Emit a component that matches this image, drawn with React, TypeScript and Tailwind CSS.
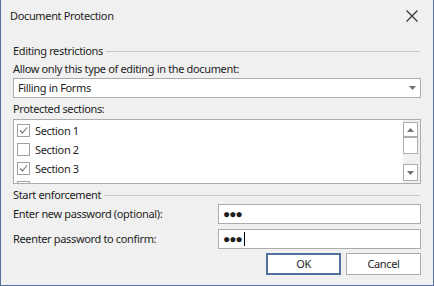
import { useState } from 'react'

const font = { fontFamily: '"Noto Sans", "Open Sans", sans-serif' }
const txt = 'text-[11px] leading-[16px] tracking-[-0.35px] text-[#1e1e1e]'

function Check() {
  return (
    <svg width="9" height="9" viewBox="0 0 9 9" fill="none">
      <path d="M1 4.5 L3.5 7 L8 1.5" stroke="#707070" strokeWidth="1.1" />
    </svg>
  )
}

function Row({ label, checked }: { label?: string; checked: boolean }) {
  return (
    <div className="flex items-center h-[19px] pl-[3px]">
      <span className="w-[13px] h-[13px] border border-[#a0a0a0] bg-white flex items-center justify-center">
        {checked && <Check />}
      </span>
      {label && <span className={'ml-[5px] ' + txt}>{label}</span>}
    </div>
  )
}

function GroupTitle({ title }: { title: string }) {
  return (
    <div className="flex items-center h-[16px]">
      <span className={'whitespace-nowrap ' + txt}>{title}</span>
      <span className="flex-1 h-px bg-[#c8c8c8] ml-[3px] mr-[1px]" />
    </div>
  )
}

function Arrow({ up }: { up?: boolean }) {
  return (
    <svg width="7" height="4" viewBox="0 0 7 4">
      <path d={up ? 'M0 4 L3.5 0 L7 4 Z' : 'M0 0 L7 0 L3.5 4 Z'} fill="#707070" />
    </svg>
  )
}

export default function App() {
  const [sections] = useState([
    { label: 'Section 1', checked: true },
    { label: 'Section 2', checked: false },
    { label: 'Section 3', checked: true },
  ])

  return (
    <div
      className="w-[434px] h-[286px] bg-[#f0f0f0] border-x border-b border-[#54709c] flex flex-col"
      style={font}
    >
      <div className="h-[32px] flex items-center justify-between pl-[9px] pr-[15px]">
        <span className={txt}>Document Protection</span>
        <svg width="12" height="12" viewBox="0 0 12 12">
          <path d="M0.5 0.5 L11.5 11.5 M11.5 0.5 L0.5 11.5" stroke="#333" strokeWidth="1.2" />
        </svg>
      </div>

      <div className="flex flex-col px-[12px] pt-[11px]">
        <GroupTitle title="Editing restrictions" />
        <div className={'mt-[2px] h-[16px] ' + txt}>
          Allow only this type of editing in the document:
        </div>
        <div className="mt-[1px] h-[20px] border border-[#acacac] bg-white flex items-center justify-between pl-[4px] pr-[4px]">
          <span className={txt}>Filling in Forms</span>
          <Arrow />
        </div>
        <div className={'mt-[3px] h-[16px] ' + txt}>Protected sections:</div>
        <div className="mt-[2px] h-[65px] border border-[#acacac] bg-white flex overflow-hidden">
          <div className="flex-1 pt-[1px]">
            {sections.map((s) => (
              <Row key={s.label} label={s.label} checked={s.checked} />
            ))}
            <Row checked={false} />
          </div>
          <div className="w-[17px] bg-[#f0f0f0] flex flex-col items-center justify-between py-[2px] pr-[2px]">
            <div className="flex flex-col">
              <div className="w-[15px] h-[15px] border border-[#acacac] bg-white flex items-center justify-center">
                <Arrow up />
              </div>
              <div className="w-[15px] h-[17px] border border-[#acacac] bg-white" />
            </div>
            <div className="w-[15px] h-[17px] border border-[#acacac] bg-white flex items-center justify-center">
              <Arrow />
            </div>
          </div>
        </div>

        <div className="mt-[3px]">
          <GroupTitle title="Start enforcement" />
        </div>
        <div className="flex items-center justify-between mt-[1px] h-[20px]">
          <span className={txt}>Enter new password (optional):</span>
          <div className="w-[203px] h-[20px] border border-[#acacac] bg-white flex items-center pl-[4px] text-[12px] tracking-[-1px] text-[#1e1e1e]">
            ●●●
          </div>
        </div>
        <div className="flex items-center justify-between mt-[5px] h-[20px]">
          <span className={txt}>Reenter password to confirm:</span>
          <div className="w-[203px] h-[20px] border border-[#acacac] bg-white flex items-center pl-[4px] text-[12px] tracking-[-1px] text-[#1e1e1e]">
            ●●●<span className="w-px h-[14px] bg-black ml-[2px]" />
          </div>
        </div>
        <div className="flex justify-end gap-[5px] mt-[4px]">
          <button className={'w-[75px] h-[22px] border-2 border-[#54709c] bg-white ' + txt}>OK</button>
          <button className={'w-[75px] h-[22px] border border-[#acacac] bg-white ' + txt}>Cancel</button>
        </div>
      </div>
    </div>
  )
}
